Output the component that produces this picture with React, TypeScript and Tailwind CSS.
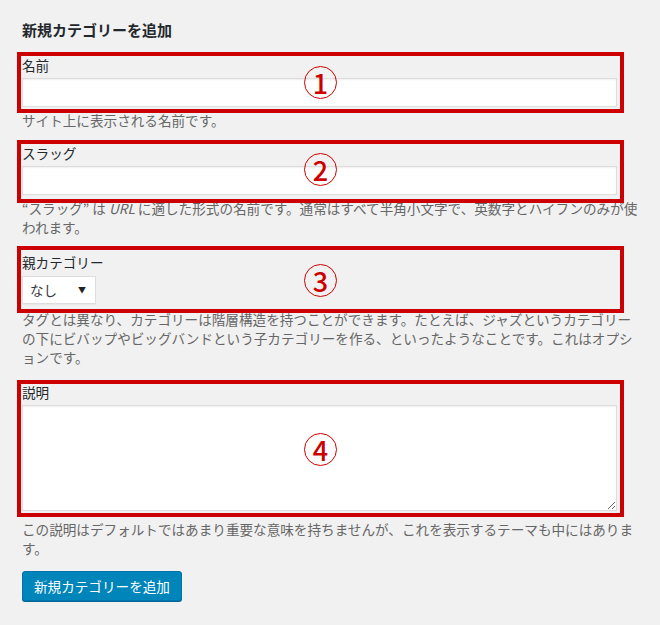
const jp = "font-['Noto_Sans_CJK_JP','Liberation_Sans',sans-serif]";

function Marker({ top, height, label, circleTop }: { top: number; height: number; label: string; circleTop: number }) {
  return (
    <>
      <div
        className="pointer-events-none absolute left-[17px] w-[607px] border-4 border-[#cc0000]"
        style={{ top, height }}
      />
      <div
        className="pointer-events-none absolute left-[304px] flex h-[33px] w-[33px] items-center justify-center rounded-full border-[1.5px] border-[#cc0000] text-[27px] font-medium leading-none text-[#cc0000]"
        style={{ top: circleTop }}
      >
        {label}
      </div>
    </>
  );
}

function TextField({ label }: { label: string }) {
  return (
    <>
      <label className="block text-[13.6px] leading-[19px] text-[#23282d]">{label}</label>
      <input
        type="text"
        className="mt-[3px] block h-[29px] w-[595px] border border-[#ddd] bg-white shadow-[inset_0_1px_2px_rgba(0,0,0,0.07)] outline-none"
      />
    </>
  );
}

export default function App() {
  return (
    <div className={`relative h-[625px] w-[660px] overflow-hidden bg-[#f1f1f1] ${jp}`}>
      <div className="pl-[22px] pt-[20px]">
        <h2 className="text-[15px] font-bold leading-[20px] text-[#23282d]">新規カテゴリーを追加</h2>

        <div className="mt-[16px]">
          <TextField label="名前" />
          <p className="mt-[4px] w-[620px] text-[13.6px] leading-[19px] text-[#666]">サイト上に表示される名前です。</p>
        </div>

        <div className="mt-[14px]">
          <TextField label="スラッグ" />
          <p className="mt-[4px] w-[620px] text-[13.6px] leading-[19px] text-[#666]">
            “スラッグ” は <em>URL</em> に適した形式の名前です。通常はすべて半角小文字で、英数字とハイフンのみが使われます。
          </p>
        </div>

        <div className="mt-[16px]">
          <label className="block text-[13.6px] leading-[19px] text-[#23282d]">親カテゴリー</label>
          <div className="mt-[4px] flex h-[28px] w-[74px] items-center justify-between border border-[#ddd] bg-white pl-[7px] pr-[9px] shadow-[0_1px_1px_rgba(0,0,0,0.04)]">
            <span className="text-[13.6px] text-[#32373c]">なし</span>
            <span className="text-[8px] text-[#222]">▼</span>
          </div>
          <p className="mt-[6px] w-[620px] text-[13.6px] leading-[19px] text-[#666]">
            タグとは異なり、カテゴリーは階層構造を持つことができます。たとえば、ジャズというカテゴリーの下にビバップやビッグバンドという子カテゴリーを作る、といったようなことです。これはオプションです。
          </p>
        </div>

        <div className="mt-[16px]">
          <label className="block text-[13.6px] leading-[19px] text-[#23282d]">説明</label>
          <textarea className="mt-[3px] block h-[106px] w-[595px] resize-y border border-[#ddd] bg-white shadow-[inset_0_1px_2px_rgba(0,0,0,0.07)] outline-none" />
          <p className="mt-[9px] w-[620px] text-[13.6px] leading-[19px] text-[#666]">
            この説明はデフォルトではあまり重要な意味を持ちませんが、これを表示するテーマも中にはあります。
          </p>
        </div>

        <button
          type="button"
          className="mt-[13px] h-[30px] rounded-[3px] border border-[#0073aa] bg-[#0085ba] px-[11px] text-[13.6px] leading-[28px] text-white shadow-[0_1px_0_#006799]"
        >
          新規カテゴリーを追加
        </button>
      </div>

      <Marker top={52} height={61} label="1" circleTop={66} />
      <Marker top={140} height={63} label="2" circleTop={153} />
      <Marker top={246} height={67} label="3" circleTop={264} />
      <Marker top={380} height={137} label="4" circleTop={433} />
    </div>
  );
}
